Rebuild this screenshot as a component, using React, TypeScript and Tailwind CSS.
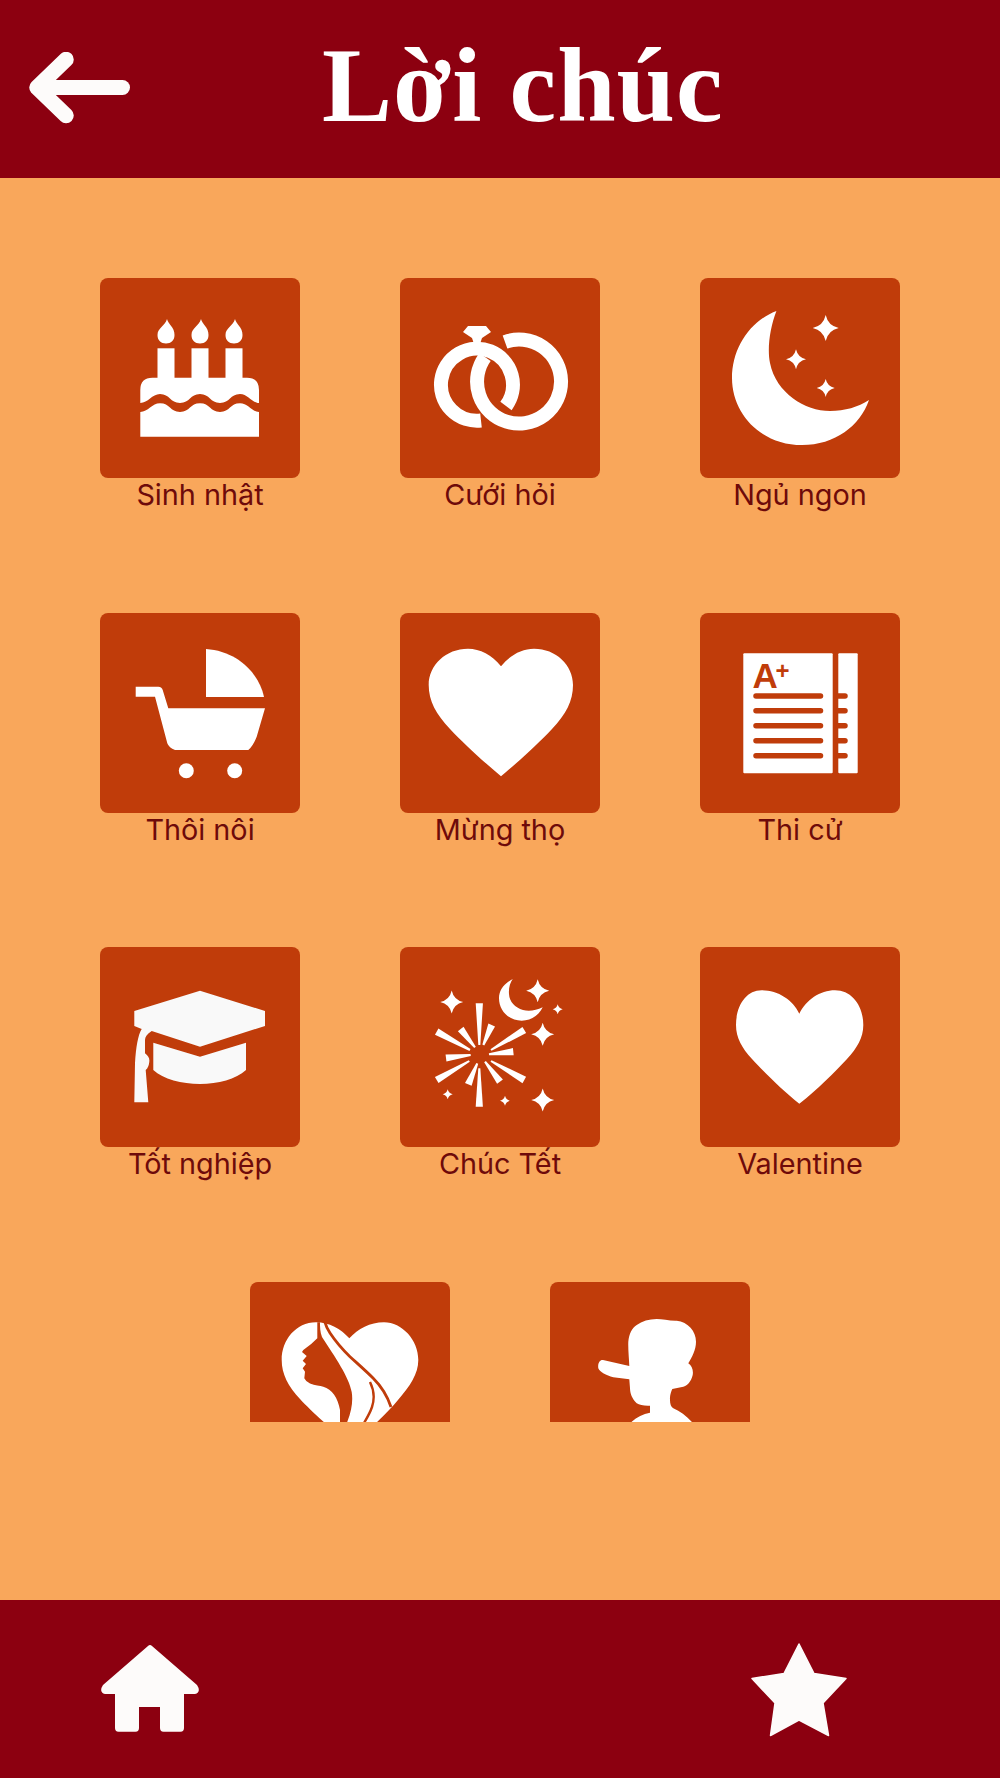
const WHITE = '#ffffff';
const TILE = '#c03c0a';

function Sparkle({ x, y, r }: { x: number; y: number; r: number }) {
  const k = r * 0.18;
  return (
    <path
      d={`M${x} ${y - r}Q${x + k} ${y - k} ${x + r} ${y}Q${x + k} ${y + k} ${x} ${y + r}Q${x - k} ${y + k} ${x - r} ${y}Q${x - k} ${y - k} ${x} ${y - r}Z`}
    />
  );
}

// tapered firework ray: wide at the outer end, thin at the inner end
function Ray({ a, b }: { a: number[]; b: number[] }) {
  const dx = b[0] - a[0];
  const dy = b[1] - a[1];
  const len = Math.hypot(dx, dy);
  const nx = -dy / len;
  const ny = dx / len;
  const w = 3.6;
  const t = 1;
  const pts = [
    [a[0] + nx * w, a[1] + ny * w],
    [b[0] + nx * t, b[1] + ny * t],
    [b[0] - nx * t, b[1] - ny * t],
    [a[0] - nx * w, a[1] - ny * w],
  ];
  return <polygon points={pts.map((p) => p.join(',')).join(' ')} />;
}

const rays = [
  [[79.3, 56.3], [79.3, 98]],
  [[79.3, 159.7], [79.3, 121.3]],
  [[36.7, 84.7], [70, 103]],
  [[60.7, 82], [75, 100.3]],
  [[91.7, 78], [83.3, 98]],
  [[124.3, 83], [91, 103]],
  [[113.3, 104.7], [89, 107.3]],
  [[46, 111], [70.7, 108]],
  [[36.7, 133], [69.3, 114]],
  [[68.3, 137.3], [77.3, 116.3]],
  [[100, 134.7], [85, 114.7]],
  [[124.3, 133], [91, 114]],
];

const Cake = () => (
  <g fill={WHITE}>
    {[66, 100, 134].map((x) => (
      <g key={x}>
        <path d={`M${x + 1} 41C${x + 2} 46 ${x + 8.5} 49 ${x + 8.5} 57C${x + 8.5} 62.5 ${x + 5} 65.5 ${x} 65.5C${x - 5} 65.5 ${x - 8.5} 62.5 ${x - 8.5} 57C${x - 8.5} 50 ${x - 1} 48 ${x + 1} 41Z`} />
        <rect x={x - 8.5} y={70.3} width={17} height={31} />
      </g>
    ))}
    <path d="M40.3 125V112Q40.3 99.7 52.5 99.7H147Q159 99.7 159 112V125C152 125 148 116 140 116C130 116 130 125 120 125C110 125 110 116 100 116C90 116 90 125 80 125C70 125 70 116 60 116C52 116 48 125 40.3 125Z" />
    <path d="M40.3 134C48 134 52 125.3 60 125.3C70 125.3 70 134 80 134C90 134 90 125.3 100 125.3C110 125.3 110 134 120 134C130 134 130 125.3 140 125.3C148 125.3 152 134 159 134V158.7H40.3Z" />
  </g>
);

const Rings = () => (
  <g>
    <path d="M81 142.5A36 36 0 1 1 106 128" fill="none" stroke={WHITE} strokeWidth={14} />
    <path d="M105 64A42 42 0 1 1 85 79" fill="none" stroke={WHITE} strokeWidth={14} />
    <polygon fill={WHITE} points="68,48 86,48 91,54 82,60 80,66 74,66 72,60 63,54" />
  </g>
);

const Moon = () => (
  <g fill={WHITE}>
    <path d="M76.4 33C50 43 32 70 32 100C32 137 62 167 102 167C135 167 160 148 169 122C158 129 145 133 130 133C105 133 76 115 70 85C67 70 70 50 76.4 33Z" />
    <Sparkle x={125.7} y={50} r={13} />
    <Sparkle x={96} y={81.3} r={10} />
    <Sparkle x={125.7} y={110} r={9} />
  </g>
);

const Stroller = () => (
  <g fill={WHITE}>
    <path d="M106 36C137 38 159 60 164 84H106Z" />
    <path d="M35.7 73.7H58.3Q62 74 62.7 77L68.3 95.3H165L156.7 123.7Q153 133 148.3 137H75Q69 135 67.3 130.3L55 83.7H35.7Z" />
    <circle cx={86.3} cy={157.7} r={7.5} />
    <circle cx={134.7} cy={157.7} r={7.5} />
  </g>
);

const Heart = () => (
  <path
    fill={WHITE}
    d="M101 53.3C92 42 80 35.7 68 35.7C46 35.7 28.7 52 28.7 72C28.7 88 36 101 50 116C64 131 84 149 101 163.3C118 149 138 131 152 116C166 101 173 88 173 72C173 52 156 35.7 134 35.7C122 35.7 110 42 101 53.3Z"
  />
);

const Exam = () => (
  <g>
    <rect x={43.3} y={40.3} width={89.4} height={120} rx={1} fill={WHITE} />
    <rect x={138.3} y={40.3} width={19.4} height={120} rx={1} fill={WHITE} />
    {[83, 97.7, 112.7, 127.7, 142.7].map((y) => (
      <g key={y} stroke={TILE} strokeWidth={5.5} strokeLinecap="round">
        <line x1={56} x2={120.5} y1={y} y2={y} />
        <line x1={138.3} x2={145} y1={y} y2={y} />
      </g>
    ))}
    <text x={52.5} y={75} fill={TILE} fontFamily="'Liberation Sans', sans-serif" fontWeight={700} fontSize={35}>
      A
    </text>
    <text x={75.5} y={66} fill={TILE} fontFamily="'Liberation Sans', sans-serif" fontWeight={700} fontSize={24}>
      +
    </text>
  </g>
);

const GradCap = () => (
  <g fill="#f9f9f9">
    <path d="M100 43.7L165 64V79L100 99.7L51.7 84C47 87 45 90 45 93V106.3Q50 110 49.3 114.7Q49 120 45.7 123L48.3 155.3H34.3L35 116C36 100 38 88 41.7 82L34.3 79V64Z" />
    <path d="M53.3 95.7L100 109.7L146 95.7V123C136 132 118 137 100 137C82 137 63 132 53.3 123Z" />
  </g>
);

const Fireworks = () => (
  <g fill={WHITE}>
    <path d="M112.7 32C103 37 99 44 99 51.3C99 64 109 73.7 121.7 73.7C131 73.7 139 68 142.7 60.3C136 63.5 129 64.5 123 63C115 60.5 109.5 55 109 47C108.5 41 110 36 112.7 32Z" />
    <Sparkle x={137.7} y={43.7} r={11.5} />
    <Sparkle x={157.7} y={62.3} r={5} />
    <Sparkle x={142.7} y={87.3} r={11.5} />
    <Sparkle x={51.7} y={55} r={11.5} />
    <Sparkle x={47.7} y={147.3} r={5} />
    <Sparkle x={105} y={153.7} r={5} />
    <Sparkle x={142.7} y={153} r={11.5} />
    {rays.map((r, i) => (
      <Ray key={i} a={r[0]} b={r[1]} />
    ))}
  </g>
);

const Valentine = () => (
  <path
    fill={WHITE}
    d="M99.3 66.7C93 53 78 43.3 61.7 43.3C46 43.3 36 59 36 78C36 91 42 101 52 112C64 125 82 143 99.3 156.7C117 143 135 125 147 112C157 101 163.3 91 163.3 78C163.3 59 152 43.3 135 43.3C120 43.3 106 53 99.3 66.7Z"
  />
);

const HairHeart = () => (
  <g>
    <path
      fill={WHITE}
      d="M99.3 56.3C91 47 79 40.3 66 40.3C46 40.3 31.7 58 31.7 78C31.7 92 38 104 50 117C60 128 78 144 100 163C120 148 138 130 148 118C160 104 168.3 92 168.3 78C168.3 58 152 40.3 134 40.3C120 40.3 108 47 99.3 56.3Z"
    />
    <path
      fill={TILE}
      d="M67.3 40.3V56.3Q62 62 53.3 68L52 70L56.7 74L52.7 78.7L56 82L52.7 86.3L55 89.7L54.3 96.3Q56 100 60 101.5C65 103.5 70 103.5 73.3 104.7C82 107 88 116 90 128V145H97.3V139.7C102 128 103 118 101.7 110C99 95 85 75 72 55C70 50 70 45 70 40.3Z"
    />
    <path d="M75 40.3C76 44 78 48 80 51C86 60 92 67 100 74.7C108 82 116 89 123 96C130 103 137 113 141 125" fill="none" stroke={TILE} strokeWidth={2.8} />
    <path d="M120 100C124 108 125 116 122 125C120 131 117 136 114 141" fill="none" stroke={TILE} strokeWidth={2.4} />
  </g>
);

const Boy = () => (
  <path
    fill={WHITE}
    d="M106.7 37C112 37 120 39 126.7 38.7C138 40 146 49 146 59.7C146 68 142 75 138.3 81.3C142 84 143.5 88 142.7 93C141 100 137 104 133.3 104.7L122.3 107C120 112 120 115 120 118C120 122 121 125 123.3 126.3C130 129 136 134 141.7 139.7V145H81.7V139.7C87 135 93 132 100 130.7V123.7C94 124 89.5 123 86.7 121.3C82 117 80 111 80 106.3L79.3 97.3L63.3 95.3C56 93.5 50 90 48.3 86.3C47.5 81 50 77.5 53 78L79.3 84C79 76 78 68 78.3 59.7C79 52 82 46 86.7 43C92 39 99 37 106.7 37Z"
  />
);

// the last row is cut by the scroll area before its labels, so they have none
const items = [
  { id: 1, label: 'Sinh nhật', icon: <Cake /> },
  { id: 2, label: 'Cưới hỏi', icon: <Rings /> },
  { id: 3, label: 'Ngủ ngon', icon: <Moon /> },
  { id: 4, label: 'Thôi nôi', icon: <Stroller /> },
  { id: 5, label: 'Mừng thọ', icon: <Heart /> },
  { id: 6, label: 'Thi cử', icon: <Exam /> },
  { id: 7, label: 'Tốt nghiệp', icon: <GradCap /> },
  { id: 8, label: 'Chúc Tết', icon: <Fireworks /> },
  { id: 9, label: 'Valentine', icon: <Valentine /> },
  { id: 10, label: '', icon: <HairHeart /> },
  { id: 11, label: '', icon: <Boy /> },
];

export default function App() {
  return (
    <div className="w-[1000px] h-[1778px] flex flex-col bg-[#f9a75b] font-['Inter',sans-serif] overflow-hidden">
      {/* Header */}
      <div className="h-[178px] shrink-0 bg-[#8c0010] flex items-center pl-[29px]">
        <svg width="101" height="72" viewBox="29 53 101 72" className="shrink-0 -mt-[2px]">
          <path d="M66 60.5L37 88.5L66 116.5" fill="none" stroke="#fdfbfa" strokeWidth={15.5} strokeLinecap="round" strokeLinejoin="round" />
          <line x1="38" y1="88.5" x2="122.5" y2="88.5" stroke="#fdfbfa" strokeWidth={15} strokeLinecap="round" />
        </svg>
        <div className="ml-[192px] -mt-[8px] font-['Liberation_Serif',serif] font-bold text-[105px] tracking-[1px] leading-none text-white whitespace-nowrap">
          Lời chúc
        </div>
      </div>

      {/* Grid, clipped by the scroll area */}
      <div className="h-[1244px] shrink-0 overflow-hidden pt-[100px]">
        <div className="flex flex-wrap justify-center">
          {items.map((item) => (
            <div key={item.id} className="w-[300px] h-[334.67px] flex flex-col items-center">
              <svg width="200" height="200" viewBox="0 0 200 200" className="rounded-lg bg-[#c03c0a] shrink-0">
                {item.icon}
              </svg>
              {item.label && (
                <div className="text-[28.8px] leading-[34px] text-[#6e0a0a] whitespace-nowrap">{item.label}</div>
              )}
            </div>
          ))}
        </div>
      </div>

      <div className="flex-1" />

      {/* Footer */}
      <div className="h-[178px] shrink-0 bg-[#8c0010] flex items-center justify-between pl-[100px] pr-[150px]">
        <svg width="100" height="100" viewBox="100 1639 100 100">
          <path
            fill="#fdfbfa"
            d="M148 1646Q150 1644 152 1646L197 1685Q201.5 1692 195 1694H184V1728Q184 1731.7 180.5 1731.7H163.5Q160 1731.7 160 1728V1707H139V1728Q139 1731.7 135.5 1731.7H118.5Q115 1731.7 115 1728V1694H105Q98.5 1692 103 1685Z"
          />
        </svg>
        <svg width="100" height="100" viewBox="750 1639 100 100">
          <path
            fill="#fdfbfa"
            stroke="#fdfbfa"
            strokeWidth={1.5}
            strokeLinejoin="round"
            d="M799 1644L814 1673.5L846 1678.5L823 1703L828.5 1735.5L799 1720L770.5 1735.5L775 1703L752 1678.5L784 1673.5Z"
          />
        </svg>
      </div>
    </div>
  );
}
